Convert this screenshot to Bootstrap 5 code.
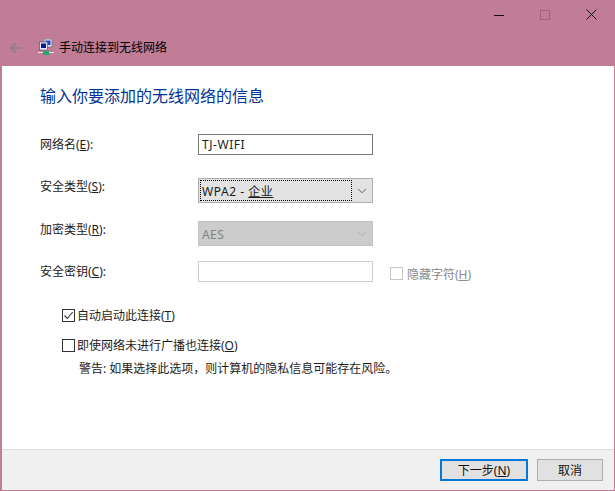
<!DOCTYPE html>
<html lang="zh-CN">
<head>
<meta charset="utf-8">
<title>手动连接到无线网络</title>
<link href="https://cdn.jsdelivr.net/npm/bootstrap@5.3.0/dist/css/bootstrap.min.css" rel="stylesheet">
<style>
html,body{height:100%;margin:0;overflow:hidden;background:#fff}
body{font-family:"Noto Sans","Noto Sans CJK SC",sans-serif;font-size:12px;line-height:16px;color:#1c1c1c}
.win{width:615px;height:491px;border:solid #c17c96;border-width:0 1px 1px 2px}
.titlebar{background:#c17c96;height:66px;flex:none;margin-left:-2px;margin-right:-1px}
.caption{height:29px;padding-right:1px}
.capbtn{width:46px;height:29px}
.navrow{height:37px;padding-left:9px}
.navtitle{font-size:12px;color:#000;margin-left:5px}
.netico{margin-left:15px;margin-top:-1px}
.pane{padding:19px 0 0 38px;background:#fff}
.heading-text{font-size:16px;line-height:22px;color:#003399;font-weight:400;margin:0 0 27px}
.frow{width:335px}
.flabel{width:158px;flex:none}
.r1{height:21px;margin-bottom:23px}
.r2{height:25px;margin-bottom:18px}
.r3{height:25px;margin-bottom:15px}
.r4{height:21px;margin-bottom:27px}
.r1 .flabel,.r4 .flabel{padding-top:3px}
.r2 .flabel,.r3 .flabel{padding-top:1px}
.winput.form-control{width:175px;height:21px;border-radius:0;border:1px solid #7a7a7a;padding:0 3px;font-size:12px;line-height:17px;color:#1c1c1c;box-shadow:none;letter-spacing:.55px}
.winput.form-control:disabled{background:#fff;border-color:#cfcfcf}
.wsel{width:175px;height:25px;border:1px solid #adadad;background:#e3e3e3;padding:1px}
.wsel-off{border-color:#c2c2c2;background:#cccccc;color:#838383}
.wsel-val{flex:1;border:1px dotted #000;padding:3px 1px 0 1px;line-height:16px;margin-right:0;letter-spacing:.55px}
.wsel-plain{flex:1;padding:4px 2px 0 2px;letter-spacing:.4px}
.wsel-arrow{width:19px}
.hidechk{margin-left:17px;color:#8a8a8a;padding-top:6px;white-space:nowrap}
.wchk.form-check-input{width:13px;height:13px;margin:0;border-radius:0;border:1px solid #333;background-color:#fff;flex:none;box-shadow:none;opacity:1}
.wchk.form-check-input:checked{background-color:#fff;border-color:#333;background-image:url("data:image/svg+xml,%3Csvg xmlns='http://www.w3.org/2000/svg' viewBox='0 0 11 11'%3E%3Cpath d='M1.5 5.5l2.8 3L9.7 2' fill='none' stroke='%23333' stroke-width='1.1'/%3E%3C/svg%3E");background-size:11px 11px}
.wchk.form-check-input:disabled{border-color:#c6c6c6}
.chkrow{margin-left:22px;height:13px;gap:2px}
.chkrow label{line-height:13px;white-space:nowrap}
.chk2{margin-top:17px}
.warn{margin:9px 0 0 39px;white-space:nowrap;color:#1c1c1c}
.foot{height:41px;flex:none;background:#f0f0f0;border-top:1px solid #dfdfdf;padding:9px 11px 0 0;gap:9px}
.wbtn.btn{height:22px;padding:1px 0 0;border-radius:0;font-size:12px;line-height:16px;color:#111;background:#e1e1e1;border:1px solid #adadad}
.wbtn-main.btn{width:88px;border:2px solid #0078d7}
.wbtn-alt.btn{width:66px}
</style>
</head>
<body>
<div class="win d-flex flex-column">
  <div class="titlebar">
    <div class="caption d-flex justify-content-end">
      <div class="capbtn d-flex align-items-center justify-content-center"><svg width="10" height="10" viewBox="0 0 10 10"><path d="M0 5.5h10" stroke="#111" stroke-width="1"/></svg></div>
      <div class="capbtn d-flex align-items-center justify-content-center"><svg width="10" height="10" viewBox="0 0 10 10"><rect x=".5" y=".5" width="9" height="9" fill="none" stroke="#a5607b"/></svg></div>
      <div class="capbtn d-flex align-items-center justify-content-center"><svg width="11" height="11" viewBox="0 0 11 11"><path d="M.5.5l10 10M10.500.5l-10 10" stroke="#111" stroke-width="1"/></svg></div>
    </div>
    <div class="navrow d-flex align-items-center">
      <svg width="14" height="12" viewBox="0 0 14 12"><path d="M13 6H2M6.500 1.500L2 6l4.500 4.500" fill="none" stroke="#8d7d84" stroke-width="1.600"/></svg>
      <svg class="netico" width="16" height="16" viewBox="0 0 16 16">
        <rect x="6" y="0" width="8" height="8" fill="#dfe6f5" stroke="#5a6a90" stroke-width=".7"/>
        <rect x="7.500" y="1.500" width="5" height="4.500" fill="#2e45b8"/>
        <rect x="1.500" y="3" width="8" height="8" fill="#e6ebf7" stroke="#4a5a80" stroke-width=".7"/>
        <rect x="3" y="4.500" width="5" height="4.500" fill="#101a78"/>
        <path d="M0 13.500h16" stroke="#e8e8e8" stroke-width="1"/>
        <rect x="5" y="12" width="6" height="4" fill="#23a86a"/>
      </svg>
      <span class="navtitle">手动连接到无线网络</span>
    </div>
  </div>
  <div class="pane flex-grow-1">
    <h1 class="heading-text">输入你要添加的无线网络的信息</h1>
    <div class="frow r1 d-flex">
      <label class="flabel" for="ssid">网络名(<u>E</u>):</label>
      <input id="ssid" class="form-control winput" value="TJ-WIFI">
    </div>
    <div class="frow r2 d-flex">
      <span class="flabel">安全类型(<u>S</u>):</span>
      <div class="wsel d-flex">
        <span class="wsel-val">WPA2 - <u>企业</u></span>
        <span class="wsel-arrow d-flex align-items-center justify-content-center"><svg width="10" height="6" viewBox="0 0 10 6"><path d="M1 .8L5 4.800L9 .8" fill="none" stroke="#555" stroke-width=".9"/></svg></span>
      </div>
    </div>
    <div class="frow r3 d-flex">
      <span class="flabel">加密类型(<u>R</u>):</span>
      <div class="wsel wsel-off d-flex">
        <span class="wsel-plain">AES</span>
        <span class="wsel-arrow d-flex align-items-center justify-content-center"><svg width="10" height="6" viewBox="0 0 10 6"><path d="M1 .8L5 4.800L9 .8" fill="none" stroke="#b0b0b0" stroke-width=".9"/></svg></span>
      </div>
    </div>
    <div class="frow r4 d-flex">
      <label class="flabel" for="key">安全密钥(<u>C</u>):</label>
      <input id="key" class="form-control winput flex-shrink-0" disabled>
      <div class="hidechk d-flex align-items-start gap-1">
        <input class="form-check-input wchk" type="checkbox" disabled aria-label="隐藏字符">
        <span>隐藏字符(<u>H</u>)</span>
      </div>
    </div>
    <div class="chkrow d-flex align-items-center">
      <input id="auto" class="form-check-input wchk" type="checkbox" checked>
      <label for="auto">自动启动此连接(<u>T</u>)</label>
    </div>
    <div class="chkrow chk2 d-flex align-items-center">
      <input id="hid" class="form-check-input wchk" type="checkbox">
      <label for="hid">即使网络未进行广播也连接(<u>O</u>)</label>
    </div>
    <div class="warn">警告: 如果选择此选项，则计算机的隐私信息可能存在风险。</div>
  </div>
  <div class="foot d-flex justify-content-end align-items-start">
    <button type="button" class="btn wbtn wbtn-main">下一步(<u>N</u>)</button>
    <button type="button" class="btn wbtn wbtn-alt">取消</button>
  </div>
</div>
<script src="https://cdn.jsdelivr.net/npm/bootstrap@5.3.0/dist/js/bootstrap.bundle.min.js"></script>
</body>
</html>
